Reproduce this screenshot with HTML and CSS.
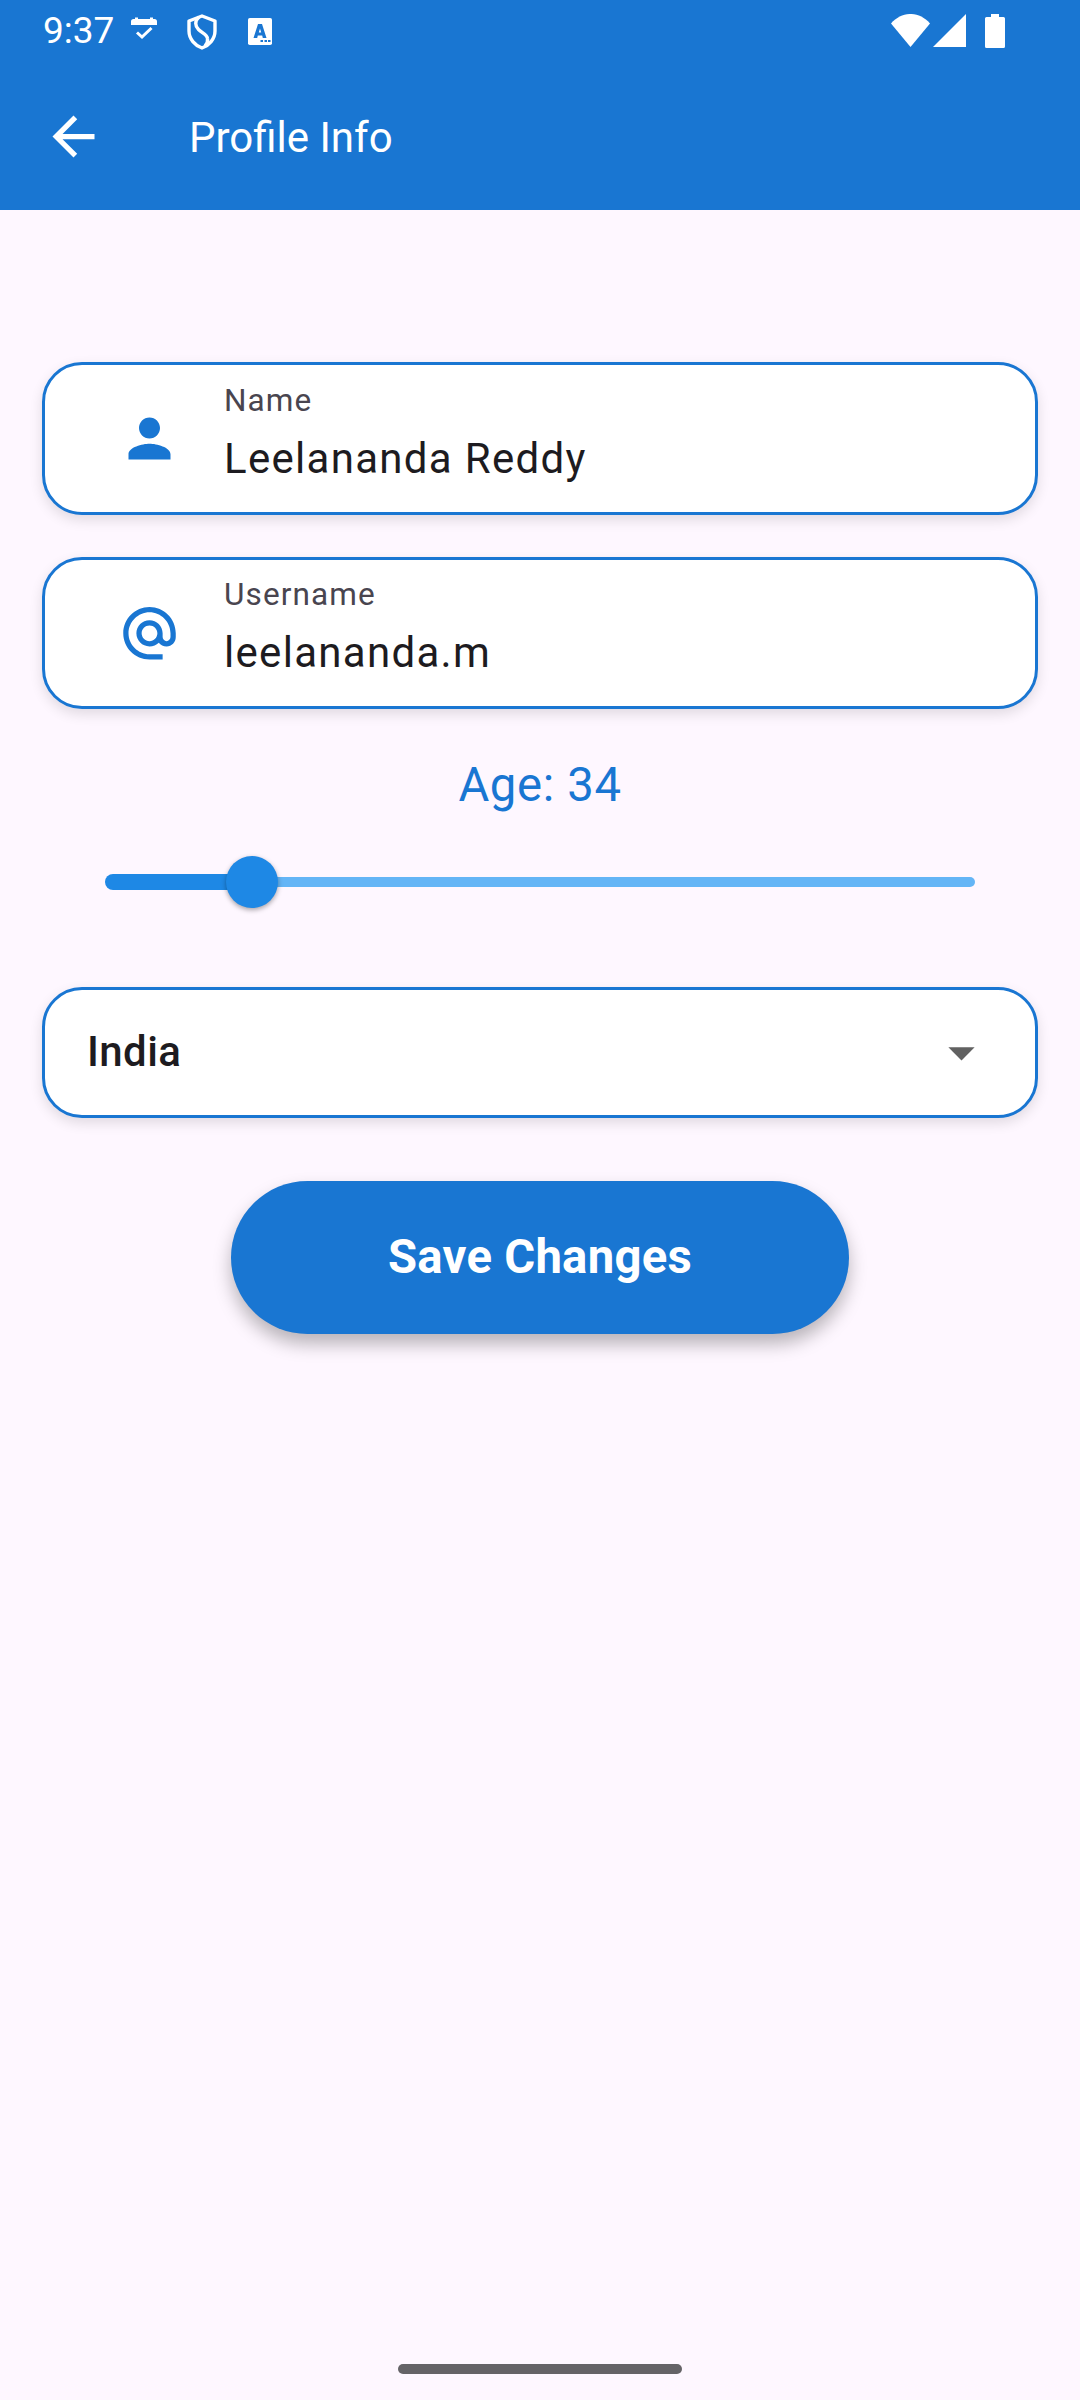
FILE: index.html
```html
<!DOCTYPE html>
<html lang="en">
<head>
<meta charset="utf-8">
<title>Profile Info</title>
<link rel="stylesheet" href="styles.css">
</head>
<body>
<header class="header">
  <div class="status">
    <span class="clock">9:37</span>
    <svg class="calendar" width="26" height="23" viewBox="0 0 26 23"><path fill="#fff" d="M0 8V4.500Q0 2 2.500 2H4V0.500H7V2H19V0.500H22V2H23.500Q26 2 26 4.500V8Z"/><path d="M6 15.500L11 20L20.500 11" fill="none" stroke="#fff" stroke-width="3"/></svg>
    <svg class="shield" width="30" height="36" viewBox="0 0 30 36"><path d="M15 2L28 7V17C28 25 22 31.500 15 34C8 31.500 2 25 2 17V7Z" fill="none" stroke="#fff" stroke-width="3.400" stroke-linejoin="round"/><path d="M12 3C7.500 7 8 12 11.500 15.500C15 19 20 20.500 20.500 24.500C21 27.500 20 30 18 32" fill="none" stroke="#fff" stroke-width="3.400"/></svg>
    <svg class="letter" width="24" height="27" viewBox="0 0 24 27"><rect width="24" height="27" rx="1.800" fill="#fff"/><path fill="#1976d2" fill-rule="evenodd" d="M10 6H14L18.500 20H14.800L14.200 17.500H9.800L9.200 20H5.500ZM12 10.500L10.800 14.500H13.200Z"/><path d="M12.500 23H15M16.500 23H19M20 23H22.500" stroke="#1976d2" stroke-width="2"/></svg>
    <svg class="signals" width="115" height="35" viewBox="0 0 115 35"><g fill="#fff"><path d="M0 9.500C11-3.200 28-3.200 39 9.500L19.500 33Z"/><path d="M42 33H75V0Z"/><path d="M100 0H108V3H112.500Q114 3 114 4.500V32.500Q114 34 112.500 34H95.500Q94 34 94 32.500V4.500Q94 3 95.500 3H100Z"/></g></svg>
  </div>
  <div class="appbar">
    <svg class="back" width="63" height="63" viewBox="0 0 24 24"><path fill="#fff" d="M20 11H7.830l5.590-5.590L12 4l-8 8 8 8 1.410-1.410L7.830 13H20z"/></svg>
    <h1 class="title">Profile Info</h1>
  </div>
</header>
<main class="content">
  <div class="card field">
    <svg width="63" height="63" viewBox="0 0 24 24"><path fill="#1976d2" d="M12 12c2.210 0 4-1.790 4-4s-1.790-4-4-4-4 1.790-4 4 1.790 4 4 4zm0 2c-2.670 0-8 1.340-8 4v2h16v-2c0-2.660-5.330-4-8-4z"/></svg>
    <div class="lines"><span class="label">Name</span><span class="value">Leelananda Reddy</span></div>
  </div>
  <div class="card field second">
    <svg width="63" height="63" viewBox="0 0 24 24"><path fill="#1976d2" d="M12 1.950c-5.520 0-10 4.480-10 10s4.480 10 10 10h5v-2h-5c-4.340 0-8-3.660-8-8s3.660-8 8-8 8 3.660 8 8v1.430c0 .79-.71 1.570-1.500 1.570s-1.500-.78-1.500-1.570v-1.430c0-2.760-2.240-5-5-5s-5 2.240-5 5 2.240 5 5 5c1.380 0 2.640-.56 3.540-1.470.65.890 1.770 1.470 2.960 1.470 1.970 0 3.500-1.600 3.500-3.570v-1.430c0-5.520-4.480-10-10-10zm0 13c-1.660 0-3-1.340-3-3s1.340-3 3-3 3 1.340 3 3-1.340 3-3 3z"/></svg>
    <div class="lines"><span class="label">Username</span><span class="value">leelananda.m</span></div>
  </div>
  <div class="age">Age: 34</div>
  <div class="slider">
    <div class="active"></div>
    <div class="inactive"></div>
    <div class="thumb"></div>
  </div>
  <div class="card select">
    <span class="country">India</span>
    <svg width="63" height="63" viewBox="0 0 24 24"><path fill="#616161" d="M7 10l5 5 5-5z"/></svg>
  </div>
  <button class="save">Save Changes</button>
</main>
<footer class="nav"><div class="handle"></div></footer>
</body>
</html>
```
FILE: styles.css
```css
* { box-sizing: border-box; }
body {
  margin: 0;
  height: 2400px;
  display: flex;
  flex-direction: column;
  background: #fef7ff;
  font-family: Roboto, sans-serif;
  color: #1d1b20;
}
svg { display: block; flex: none; }
.header { height: 210px; background: #1976d2; color: #fff; }
.status { height: 63px; display: flex; align-items: flex-start; padding: 14px 74px 0 43px; }
.clock { width: 88px; font-size: 37px; line-height: 34px; }
.calendar { margin-top: 3px; }
.shield { margin-left: 30px; }
.letter { margin: 4px 0 0 31px; }
.signals { margin-left: auto; }
.appbar { height: 147px; display: flex; align-items: center; padding: 0 42px; }
.title { margin: 0 0 0 84px; padding-top: 2px; font-size: 42px; line-height: 60px; font-weight: 400; }
.content { flex: 1; display: flex; flex-direction: column; padding: 152px 42px 0; }
.card {
  background: #fff;
  border: 3px solid #1976d2;
  border-radius: 40px;
  box-shadow: 0 5px 13px rgba(0, 0, 0, 0.12);
}
.field { height: 153px; display: flex; align-items: center; padding: 0 73px; gap: 43px; }
.second { height: 152px; margin-top: 42px; }
.lines { display: flex; flex-direction: column; padding-bottom: 6px; }
.label { font-size: 31.500px; line-height: 46px; letter-spacing: 1.100px; color: #49454f; }
.value { font-size: 42px; line-height: 70px; letter-spacing: 1.300px; }
.age {
  margin-top: 48px;
  text-align: center;
  font-size: 47.250px;
  line-height: 56px;
  letter-spacing: 0.650px;
  color: #1976d2;
}
.slider {
  position: relative;
  display: flex;
  align-items: center;
  height: 52px;
  margin: 43px 63px 0;
}
.active { width: 147px; height: 16px; border-radius: 8px 0 0 8px; background: #1e88e5; }
.inactive { flex: 1; height: 10px; border-radius: 0 5px 5px 0; background: #64b5f6; }
.thumb {
  position: absolute;
  left: 121px;
  top: 0;
  width: 52px;
  height: 52px;
  border-radius: 50%;
  background: #1e88e5;
  box-shadow: 0 2px 5px rgba(0, 0, 0, 0.35);
}
.select {
  height: 131px;
  margin-top: 79px;
  display: flex;
  align-items: center;
  justify-content: space-between;
  padding: 0 42px;
}
.country { padding-bottom: 2px; font-size: 42px; line-height: 60px; font-weight: 500; letter-spacing: 0.400px; }
.save {
  align-self: center;
  width: 618px;
  height: 153px;
  margin-top: 63px;
  padding: 0 0 2px;
  border: 0;
  border-radius: 79px;
  background: #1976d2;
  color: #fff;
  font: bold 47.250px/56px Roboto, sans-serif;
  letter-spacing: 0.260px;
  box-shadow: 0 10px 18px rgba(0, 0, 0, 0.28);
}
.nav { height: 36px; display: flex; justify-content: center; }
.handle { width: 284px; height: 10px; border-radius: 5px; background: #656367; }
```
